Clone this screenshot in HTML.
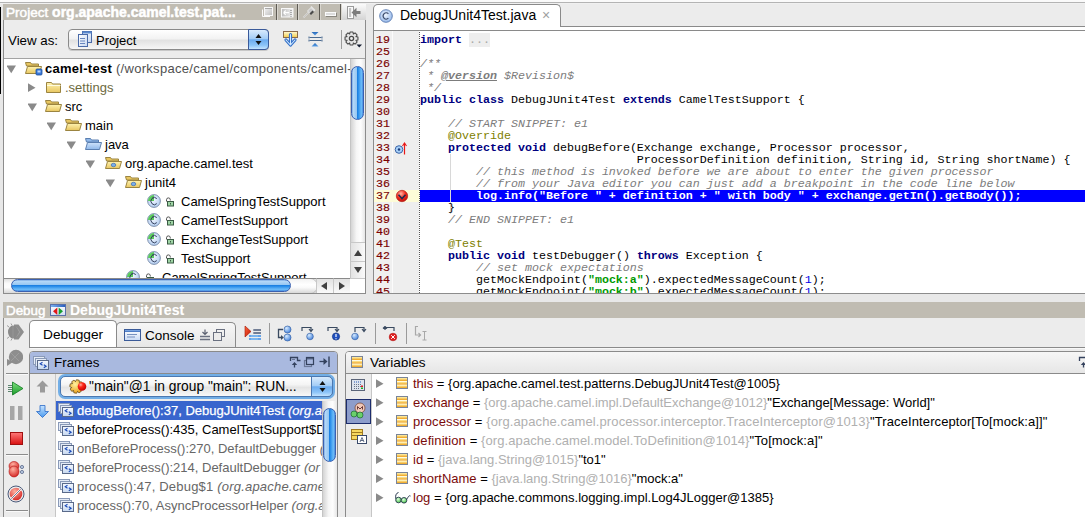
<!DOCTYPE html>
<html><head><meta charset="utf-8">
<style>
*{margin:0;padding:0;box-sizing:border-box}
html,body{width:1085px;height:517px;overflow:hidden;background:#e8e8e8;font-family:"Liberation Sans",sans-serif;font-size:13px;color:#000}
body{position:relative}
.a{position:absolute;display:block}
.t{position:absolute;white-space:pre;line-height:19px}
.m{position:absolute;font-family:"Liberation Mono",monospace;font-size:11.67px;line-height:12px;white-space:pre}
.kw{color:#000080;font-weight:bold}
.cm{color:#7c7c7c;font-style:italic}
.an{color:#808000}
.st{color:#009900;font-weight:bold}
.nu{color:#0000e6}
.ttl{color:#fff;text-shadow:0 0 1px rgba(255,255,255,.3)}
</style></head><body>

<div class="a" style="left:0px;top:0px;width:1085px;height:2px;background:#fafafa"></div>
<div class="a" style="left:0px;top:2px;width:1085px;height:1px;background:#b4b4b4"></div>
<div class="a" style="left:0px;top:3px;width:1085px;height:1px;background:#f0f0f0"></div>
<div class="a" style="left:0px;top:7px;width:1px;height:87px;background:#000"></div>
<div class="a" style="left:3px;top:4px;width:363px;height:290px;background:#ececec;border-left:1px solid #8c8c8c;border-right:1px solid #8c8c8c;border-bottom:1px solid #8c8c8c"></div>
<div class="a" style="left:3px;top:4px;width:363px;height:16px;background:#c0bcb2"></div>
<div class="t ttl" style="left:6px;top:4px;line-height:17px;font-size:13.6px;-webkit-text-stroke:.4px #fff">Project <b style="font-size:14px">org.apache.camel.test.pat...</b></div>
<div class="a" style="left:341px;top:4px;width:25px;height:16px;background:linear-gradient(#fbfbfb,#d4d4d4)"></div>
<div class="a" style="left:276px;top:4px;width:1px;height:16px;background:#5e5b54"></div>
<div class="a" style="left:277px;top:4px;width:1px;height:16px;background:#d8d5ce"></div>
<div class="a" style="left:297px;top:4px;width:1px;height:16px;background:#5e5b54"></div>
<div class="a" style="left:298px;top:4px;width:1px;height:16px;background:#d8d5ce"></div>
<div class="a" style="left:319px;top:4px;width:1px;height:16px;background:#5e5b54"></div>
<div class="a" style="left:320px;top:4px;width:1px;height:16px;background:#d8d5ce"></div>
<div class="a" style="left:340px;top:4px;width:1px;height:16px;background:#5e5b54"></div>
<div class="a" style="left:341px;top:4px;width:1px;height:16px;background:#d8d5ce"></div>
<svg class="a" style="left:261px;top:6px;" width="13" height="12" viewBox="0 0 13 12"><defs><linearGradient id="rw" x1="0" y1="0" x2="1" y2="1"><stop offset="0" stop-color="#f4f4f4"/><stop offset="1" stop-color="#bdbdbd"/></linearGradient></defs><path d="M1.5 3.5 V10.5 H9" stroke="#fafafa" fill="none" stroke-width="1"/><rect x="3.5" y="1.5" width="8" height="8" fill="url(#rw)" stroke="#f8f8f8"/><path d="M4 2.5 H11" stroke="#a8a8a8"/></svg>
<svg class="a" style="left:280px;top:7px;" width="14" height="11" viewBox="0 0 14 11"><defs><linearGradient id="sw" x1="0" y1="0" x2="1" y2="0"><stop offset="0" stop-color="#bcbcbc"/><stop offset="1" stop-color="#f2f2f2"/></linearGradient></defs><rect x="1.5" y="1.5" width="11.5" height="8.5" fill="url(#sw)" stroke="#f8f8f8"/><path d="M3.5 5.7 H9 M3.5 5.7 L5.7 3.5 M3.5 5.7 L5.7 7.9" stroke="#fff" stroke-width="1.2"/><path d="M11 3 v.8 M11 5 v.8 M11 7 v.8 M11 9 v.6" stroke="#555" stroke-width="1"/></svg>
<svg class="a" style="left:302px;top:5px;" width="14" height="14" viewBox="0 0 14 14"><path d="M1.5 12.5 L6.5 7.5" stroke="#f0f0f0" stroke-width="1.3"/><path d="M1.5 12.5 L6.5 7.5" stroke="#9a9a9a" stroke-width=".5"/><path d="M5.5 6 L9 2.5 L12 5.5 L8.5 9 Z" fill="#c8c8c8" stroke="#f4f4f4" stroke-width=".8"/><path d="M7.5 8.5 L10.5 5.5 L12 7 L9 10Z" fill="#4a4a4a"/><path d="M9 1.5 L13 5.5" stroke="#e8e8e8" stroke-width="1.2"/></svg>
<div class="a" style="left:325px;top:12px;width:11px;height:4px;background:#dcdcdc;border:1px solid #fafafa;box-shadow:1px 1px 0 #8a877f"></div>
<svg class="a" style="left:346px;top:5px;" width="16" height="15" viewBox="0 0 16 15"><rect x="1.5" y="1.5" width="6" height="12" fill="#fafafa" stroke="#9a9a9a"/><rect x="3" y="3" width="2.2" height="9" fill="#c4c4c4"/><path d="M5.5 7.5 L10.5 2.8 V6 H14.5 V9 H10.5 V12.2 Z" fill="#7c7c7c"/></svg>
<div class="a" style="left:4px;top:20px;width:361px;height:38px;background:#ececec"></div>
<div class="a" style="left:4px;top:58px;width:361px;height:1px;background:#a3a3a3"></div>
<div class="t" style="left:8px;top:31px;line-height:19px;font-size:13.3px">View as:</div>
<div class="a" style="left:68px;top:29px;width:201px;height:21px;border:1px solid #8a8a8a;border-radius:4px;background:linear-gradient(#ffffff,#f3f3f3 45%,#e2e2e2 55%,#f6f6f6);box-shadow:0 1px 0 rgba(0,0,0,.15)"></div>
<div class="a" style="left:248px;top:29px;width:21px;height:21px;border:1px solid #3a5a9a;border-radius:0 4px 4px 0;background:linear-gradient(#d8eafd,#a4cdf6 45%,#6cabef 52%,#8cc4f8 80%,#c4e4ff)"></div>
<svg class="a" style="left:254px;top:33px;" width="9" height="13" viewBox="0 0 9 13"><path d="M4.5 1 L7.5 5 H1.5Z M4.5 12 L7.5 8 H1.5Z" fill="#111"/></svg>
<svg class="a" style="left:77px;top:31px;" width="15" height="16" viewBox="0 0 15 16"><defs><linearGradient id="pj" x1="0" y1="0" x2="1" y2="1"><stop offset="0" stop-color="#ffffff"/><stop offset="1" stop-color="#c8d8f0"/></linearGradient></defs><rect x="5.5" y="0.5" width="9" height="11" fill="url(#pj)" stroke="#4a6aa8"/><rect x="5.5" y="0.5" width="9" height="2" fill="#5a8ad0"/><rect x="1.5" y="3.5" width="9" height="12" fill="url(#pj)" stroke="#4a6aa8"/><path d="M3 7.5h5M3 10h5M3 12.5h5" stroke="#5a7ab8" stroke-width=".9"/></svg>
<div class="t" style="left:96px;top:30px;line-height:21px;">Project</div>
<svg class="a" style="left:282px;top:30px;" width="17" height="18" viewBox="0 0 17 18"><defs><linearGradient id="sy" x1="0" y1="0" x2="0" y2="1"><stop offset="0" stop-color="#fffbd8"/><stop offset="1" stop-color="#f4cc48"/></linearGradient></defs><rect x="1.5" y="1.5" width="14" height="6" fill="url(#sy)" stroke="#8a6a4a"/><path d="M8.5 4.5 V14.5 M4 10 L8.5 15 L13 10" fill="none" stroke="#3270c8" stroke-width="3.2" stroke-linecap="round" stroke-linejoin="round"/><path d="M8.5 4.5 V14.5 M4 10 L8.5 15 L13 10" fill="none" stroke="#d4eaff" stroke-width="1.1" stroke-linecap="round" stroke-linejoin="round"/></svg>
<svg class="a" style="left:308px;top:31px;" width="15" height="17" viewBox="0 0 15 17"><defs><linearGradient id="ct" x1="0" y1="0" x2="0" y2="1"><stop offset="0" stop-color="#2a6ab8"/><stop offset="1" stop-color="#5aa0e8"/></linearGradient></defs><path d="M3.5 1 H10.5 L7 4.5Z" fill="url(#ct)"/><path d="M3.5 15.5 H10.5 L7 12Z" fill="url(#ct)"/><path d="M1.5 6.5 H13.5 M1.5 9.5 H13.5" stroke="#4a6a90" stroke-width="1.1"/><path d="M1 5.5 V7.5 M14 5.5 V7.5 M1 8.5 V10.5 M14 8.5 V10.5" stroke="#4a6a90" stroke-width="1"/></svg>
<div class="a" style="left:341px;top:30px;width:1px;height:19px;background:#9c9c9c"></div>
<svg class="a" style="left:344px;top:31px;" width="20" height="18" viewBox="0 0 20 18"><path d="M11.97 5.50 L13.94 6.06 L13.94 8.94 L11.97 9.50 L12.08 9.25 L13.07 11.04 L11.04 13.07 L9.25 12.08 L9.50 11.97 L8.94 13.94 L6.06 13.94 L5.50 11.97 L5.75 12.08 L3.96 13.07 L1.93 11.04 L2.92 9.25 L3.03 9.50 L1.06 8.94 L1.06 6.06 L3.03 5.50 L2.92 5.75 L1.93 3.96 L3.96 1.93 L5.75 2.92 L5.50 3.03 L6.06 1.06 L8.94 1.06 L9.50 3.03 L9.25 2.92 L11.04 1.93 L13.07 3.96 L12.08 5.75Z" fill="#e6e6e6" stroke="#4a4a4a" stroke-width="1.1" stroke-linejoin="round"/><circle cx="7.5" cy="7.5" r="2.1" fill="#ececec" stroke="#4a4a4a" stroke-width="1.3"/><path d="M12.5 13.5 h5.5 l-2.75 3z" fill="#141c30"/></svg>
<div class="a" style="left:4px;top:59px;width:346px;height:219px;background:#fff"></div>
<svg class="a" style="left:7px;top:65px;" width="10" height="9" viewBox="0 0 10 9"><path d="M-0.5 0.6 L9 0.6 L4.25 8.2 Z" fill="#8a8a8a"/></svg>
<svg class="a" style="left:25px;top:60px;" width="18" height="16" viewBox="0 0 18 16"><defs><linearGradient id="g25_60" x1="0" y1="0" x2="0" y2="1"><stop offset="0" stop-color="#fff3b0"/><stop offset="1" stop-color="#e8c660"/></linearGradient></defs><path d="M0.5 2.5 h5 l1 1.5 h7 v2 h-12 z" fill="#e8c660" stroke="#9b8440" stroke-width="1"/><path d="M0.5 13.5 L2.5 6.5 H16.5 L14.5 13.5 Z" fill="url(#g25_60)" stroke="#9b8440" stroke-width="1"/><rect x="11" y="9" width="6" height="6" rx="1" fill="#3a78d8" stroke="#1d4f9c" stroke-width=".8"/><rect x="12.5" y="10.5" width="3" height="2" fill="#bcd6f8"/></svg>
<div class="t" style="left:45px;top:59px"><b style="letter-spacing:.27px">camel-test</b><span style="color:#505050;letter-spacing:.3px"> (/workspace/camel/components/camel-</span></div>
<svg class="a" style="left:28px;top:83px;" width="9" height="10" viewBox="0 0 9 10"><path d="M0 0.3 L7.5 4.65 L0 9 Z" fill="#8a8a8a"/></svg>
<svg class="a" style="left:46px;top:79px;" width="18" height="16" viewBox="0 0 18 16"><defs><linearGradient id="g46_79" x1="0" y1="0" x2="0" y2="1"><stop offset="0" stop-color="#fff3b0"/><stop offset="1" stop-color="#e8c660"/></linearGradient></defs><path d="M0.5 3.5 h5 l1 1.5 h8 v8.5 h-14 z" fill="url(#g46_79)" stroke="#9b8440" stroke-width="1"/><path d="M1 6.5 h13.5" stroke="#fffbe0" stroke-width="1"/></svg>
<div class="t" style="left:65px;top:78px;line-height:19px;color:#6d6a3e">.settings</div>
<svg class="a" style="left:28px;top:103px;" width="10" height="9" viewBox="0 0 10 9"><path d="M-0.5 0.6 L9 0.6 L4.25 8.2 Z" fill="#8a8a8a"/></svg>
<svg class="a" style="left:45px;top:98px;" width="18" height="16" viewBox="0 0 18 16"><defs><linearGradient id="g45_98" x1="0" y1="0" x2="0" y2="1"><stop offset="0" stop-color="#fff3b0"/><stop offset="1" stop-color="#e8c660"/></linearGradient></defs><path d="M0.5 2.5 h5 l1 1.5 h7 v2 h-12 z" fill="#e8c660" stroke="#9b8440" stroke-width="1"/><path d="M0.5 13.5 L2.5 6.5 H16.5 L14.5 13.5 Z" fill="url(#g45_98)" stroke="#9b8440" stroke-width="1"/></svg>
<div class="t" style="left:65px;top:97px;line-height:19px;">src</div>
<svg class="a" style="left:47px;top:122px;" width="10" height="9" viewBox="0 0 10 9"><path d="M-0.5 0.6 L9 0.6 L4.25 8.2 Z" fill="#8a8a8a"/></svg>
<svg class="a" style="left:65px;top:117px;" width="18" height="16" viewBox="0 0 18 16"><defs><linearGradient id="g65_117" x1="0" y1="0" x2="0" y2="1"><stop offset="0" stop-color="#fff3b0"/><stop offset="1" stop-color="#e8c660"/></linearGradient></defs><path d="M0.5 2.5 h5 l1 1.5 h7 v2 h-12 z" fill="#e8c660" stroke="#9b8440" stroke-width="1"/><path d="M0.5 13.5 L2.5 6.5 H16.5 L14.5 13.5 Z" fill="url(#g65_117)" stroke="#9b8440" stroke-width="1"/></svg>
<div class="t" style="left:85px;top:116px;line-height:19px;">main</div>
<svg class="a" style="left:67px;top:141px;" width="10" height="9" viewBox="0 0 10 9"><path d="M-0.5 0.6 L9 0.6 L4.25 8.2 Z" fill="#8a8a8a"/></svg>
<svg class="a" style="left:85px;top:136px;" width="18" height="16" viewBox="0 0 18 16"><defs><linearGradient id="g85_136" x1="0" y1="0" x2="0" y2="1"><stop offset="0" stop-color="#cfe3fb"/><stop offset="1" stop-color="#8fb8ea"/></linearGradient></defs><path d="M0.5 2.5 h5 l1 1.5 h7 v2 h-12 z" fill="#8fb8ea" stroke="#5b7fb0" stroke-width="1"/><path d="M0.5 13.5 L2.5 6.5 H16.5 L14.5 13.5 Z" fill="url(#g85_136)" stroke="#5b7fb0" stroke-width="1"/></svg>
<div class="t" style="left:105px;top:135px;line-height:19px;">java</div>
<svg class="a" style="left:86px;top:160px;" width="10" height="9" viewBox="0 0 10 9"><path d="M-0.5 0.6 L9 0.6 L4.25 8.2 Z" fill="#8a8a8a"/></svg>
<svg class="a" style="left:105px;top:155px;" width="18" height="16" viewBox="0 0 18 16"><defs><linearGradient id="g105_155" x1="0" y1="0" x2="0" y2="1"><stop offset="0" stop-color="#fff3b0"/><stop offset="1" stop-color="#e8c660"/></linearGradient></defs><path d="M0.5 2.5 h5 l1 1.5 h7 v2 h-12 z" fill="#e8c660" stroke="#9b8440" stroke-width="1"/><path d="M0.5 13.5 L2.5 6.5 H16.5 L14.5 13.5 Z" fill="url(#g105_155)" stroke="#9b8440" stroke-width="1"/><ellipse cx="8.5" cy="10" rx="2.3" ry="1.7" fill="#7aaeea" stroke="#3a6ab0" stroke-width=".7"/></svg>
<div class="t" style="left:125px;top:154px;line-height:19px;">org.apache.camel.test</div>
<svg class="a" style="left:106px;top:179px;" width="10" height="9" viewBox="0 0 10 9"><path d="M-0.5 0.6 L9 0.6 L4.25 8.2 Z" fill="#8a8a8a"/></svg>
<svg class="a" style="left:125px;top:174px;" width="18" height="16" viewBox="0 0 18 16"><defs><linearGradient id="g125_174" x1="0" y1="0" x2="0" y2="1"><stop offset="0" stop-color="#fff3b0"/><stop offset="1" stop-color="#e8c660"/></linearGradient></defs><path d="M0.5 2.5 h5 l1 1.5 h7 v2 h-12 z" fill="#e8c660" stroke="#9b8440" stroke-width="1"/><path d="M0.5 13.5 L2.5 6.5 H16.5 L14.5 13.5 Z" fill="url(#g125_174)" stroke="#9b8440" stroke-width="1"/><ellipse cx="8.5" cy="10" rx="2.3" ry="1.7" fill="#7aaeea" stroke="#3a6ab0" stroke-width=".7"/></svg>
<div class="t" style="left:145px;top:173px;line-height:19px;">junit4</div>
<svg class="a" style="left:147px;top:194px;" width="14" height="14" viewBox="0 0 14 14"><defs><radialGradient id="cg" cx=".45" cy=".4" r=".7"><stop offset="0" stop-color="#f4f8ff"/><stop offset="1" stop-color="#a8c6ee"/></radialGradient></defs><circle cx="7" cy="7" r="6.4" fill="url(#cg)" stroke="#6a7c9c" stroke-width=".8"/><path d="M7 7 L7 1 A6 6 0 0 0 1 7 Z" fill="#5acc5a"/><path d="M9.8 4.6 A3.4 3.6 0 1 0 9.8 9.6" fill="none" stroke="#34405e" stroke-width="1"/><path d="M6 2.8 v2" stroke="#34405e" stroke-width=".7"/></svg>
<svg class="a" style="left:165px;top:197px;" width="10" height="10" viewBox="0 0 10 10"><path d="M1.5 4.5 V2.8 A1.9 1.9 0 0 1 5.3 2.8 V3.5" fill="none" stroke="#555" stroke-width="1"/><rect x="2.5" y="4.5" width="6" height="4.5" fill="#9ed4a4" stroke="#3a5a44" stroke-width="1"/><path d="M5.5 6 v1.5" stroke="#3a5a44"/></svg>
<div class="t" style="left:181px;top:192px;line-height:19px;">CamelSpringTestSupport</div>
<svg class="a" style="left:147px;top:213px;" width="14" height="14" viewBox="0 0 14 14"><defs><radialGradient id="cg" cx=".45" cy=".4" r=".7"><stop offset="0" stop-color="#f4f8ff"/><stop offset="1" stop-color="#a8c6ee"/></radialGradient></defs><circle cx="7" cy="7" r="6.4" fill="url(#cg)" stroke="#6a7c9c" stroke-width=".8"/><path d="M7 7 L7 1 A6 6 0 0 0 1 7 Z" fill="#5acc5a"/><path d="M9.8 4.6 A3.4 3.6 0 1 0 9.8 9.6" fill="none" stroke="#34405e" stroke-width="1"/><path d="M6 2.8 v2" stroke="#34405e" stroke-width=".7"/></svg>
<svg class="a" style="left:165px;top:216px;" width="10" height="10" viewBox="0 0 10 10"><path d="M1.5 4.5 V2.8 A1.9 1.9 0 0 1 5.3 2.8 V3.5" fill="none" stroke="#555" stroke-width="1"/><rect x="2.5" y="4.5" width="6" height="4.5" fill="#9ed4a4" stroke="#3a5a44" stroke-width="1"/><path d="M5.5 6 v1.5" stroke="#3a5a44"/></svg>
<div class="t" style="left:181px;top:211px;line-height:19px;">CamelTestSupport</div>
<svg class="a" style="left:147px;top:232px;" width="14" height="14" viewBox="0 0 14 14"><defs><radialGradient id="cg" cx=".45" cy=".4" r=".7"><stop offset="0" stop-color="#f4f8ff"/><stop offset="1" stop-color="#a8c6ee"/></radialGradient></defs><circle cx="7" cy="7" r="6.4" fill="url(#cg)" stroke="#6a7c9c" stroke-width=".8"/><path d="M7 7 L7 1 A6 6 0 0 0 1 7 Z" fill="#5acc5a"/><path d="M9.8 4.6 A3.4 3.6 0 1 0 9.8 9.6" fill="none" stroke="#34405e" stroke-width="1"/><path d="M6 2.8 v2" stroke="#34405e" stroke-width=".7"/></svg>
<svg class="a" style="left:165px;top:235px;" width="10" height="10" viewBox="0 0 10 10"><path d="M1.5 4.5 V2.8 A1.9 1.9 0 0 1 5.3 2.8 V3.5" fill="none" stroke="#555" stroke-width="1"/><rect x="2.5" y="4.5" width="6" height="4.5" fill="#9ed4a4" stroke="#3a5a44" stroke-width="1"/><path d="M5.5 6 v1.5" stroke="#3a5a44"/></svg>
<div class="t" style="left:181px;top:230px;line-height:19px;">ExchangeTestSupport</div>
<svg class="a" style="left:147px;top:251px;" width="14" height="14" viewBox="0 0 14 14"><defs><radialGradient id="cg" cx=".45" cy=".4" r=".7"><stop offset="0" stop-color="#f4f8ff"/><stop offset="1" stop-color="#a8c6ee"/></radialGradient></defs><circle cx="7" cy="7" r="6.4" fill="url(#cg)" stroke="#6a7c9c" stroke-width=".8"/><path d="M7 7 L7 1 A6 6 0 0 0 1 7 Z" fill="#5acc5a"/><path d="M9.8 4.6 A3.4 3.6 0 1 0 9.8 9.6" fill="none" stroke="#34405e" stroke-width="1"/><path d="M6 2.8 v2" stroke="#34405e" stroke-width=".7"/></svg>
<svg class="a" style="left:165px;top:254px;" width="10" height="10" viewBox="0 0 10 10"><path d="M1.5 4.5 V2.8 A1.9 1.9 0 0 1 5.3 2.8 V3.5" fill="none" stroke="#555" stroke-width="1"/><rect x="2.5" y="4.5" width="6" height="4.5" fill="#9ed4a4" stroke="#3a5a44" stroke-width="1"/><path d="M5.5 6 v1.5" stroke="#3a5a44"/></svg>
<div class="t" style="left:181px;top:249px;line-height:19px;">TestSupport</div>
<svg class="a" style="left:126px;top:270px;" width="14" height="14" viewBox="0 0 14 14"><defs><radialGradient id="cg" cx=".45" cy=".4" r=".7"><stop offset="0" stop-color="#f4f8ff"/><stop offset="1" stop-color="#a8c6ee"/></radialGradient></defs><circle cx="7" cy="7" r="6.4" fill="url(#cg)" stroke="#6a7c9c" stroke-width=".8"/><path d="M7 7 L7 1 A6 6 0 0 0 1 7 Z" fill="#5acc5a"/><path d="M9.8 4.6 A3.4 3.6 0 1 0 9.8 9.6" fill="none" stroke="#34405e" stroke-width="1"/><path d="M6 2.8 v2" stroke="#34405e" stroke-width=".7"/></svg>
<svg class="a" style="left:145px;top:273px;" width="10" height="10" viewBox="0 0 10 10"><path d="M1.5 4.5 V2.8 A1.9 1.9 0 0 1 5.3 2.8 V3.5" fill="none" stroke="#555" stroke-width="1"/><rect x="2.5" y="4.5" width="6" height="4.5" fill="#9ed4a4" stroke="#3a5a44" stroke-width="1"/><path d="M5.5 6 v1.5" stroke="#3a5a44"/></svg>
<div class="t" style="left:162px;top:268px;line-height:19px;">CamelSpringTestSupport</div>
<div class="a" style="left:350px;top:59px;width:15px;height:219px;background:linear-gradient(90deg,#d4d4d4,#f6f6f6 40%,#fdfdfd 70%,#e6e6e6);border-left:1px solid #c4c4c4"></div>
<div class="a" style="left:351px;top:66px;width:13px;height:54px;border-radius:7px;border:1px solid #3a60b0;background:linear-gradient(90deg,#7aa8e0,#b4d8f8 12%,#98c8f2 42%,#1a7ee0 48%,#2a8eea 58%,#6cbcf8 85%,#4a8ee0)"></div>
<div class="a" style="left:350px;top:242px;width:15px;height:19px;background:linear-gradient(90deg,#e2e2e2,#fafafa);border-top:1px solid #c8c8c8;border-left:1px solid #c4c4c4"></div>
<div class="a" style="left:350px;top:261px;width:15px;height:17px;background:linear-gradient(90deg,#e2e2e2,#fafafa);border-top:1px solid #c8c8c8;border-left:1px solid #c4c4c4"></div>
<svg class="a" style="left:354px;top:250px;" width="8" height="6" viewBox="0 0 8 6"><path d="M4 0 L8 6 H0Z" fill="#404040"/></svg>
<svg class="a" style="left:354px;top:267px;" width="8" height="6" viewBox="0 0 8 6"><path d="M4 6 L8 0 H0Z" fill="#404040"/></svg>
<div class="a" style="left:4px;top:278px;width:346px;height:15px;background:linear-gradient(#e0e0e0,#fafafa 30%,#fdfdfd 60%,#d8d8d8);border-top:1px solid #8a8a8a"></div>
<div class="a" style="left:260px;top:279px;width:57px;height:14px;border-radius:0 8px 8px 0;background:linear-gradient(#f2f2f2,#ffffff 40%,#fafafa 60%,#d8d8d8);box-shadow:1px 0 1px rgba(0,0,0,.25)"></div>
<div class="a" style="left:11px;top:279px;width:280px;height:13px;border-radius:7px;border:1px solid #3a60b0;background:linear-gradient(#7aa8e0,#b4d8f8 12%,#98c8f2 42%,#1a7ee0 48%,#2a8eea 58%,#6cbcf8 85%,#4a8ee0)"></div>
<div class="a" style="left:316px;top:278px;width:17px;height:15px;background:linear-gradient(#e2e2e2,#fafafa);border-left:1px solid #c8c8c8;border-top:1px solid #8a8a8a"></div>
<div class="a" style="left:333px;top:278px;width:17px;height:15px;background:linear-gradient(#e2e2e2,#fafafa);border-left:1px solid #c8c8c8;border-top:1px solid #8a8a8a"></div>
<svg class="a" style="left:321px;top:282px;" width="6" height="8" viewBox="0 0 6 8"><path d="M0 4 L6 0 V8Z" fill="#404040"/></svg>
<svg class="a" style="left:339px;top:282px;" width="6" height="8" viewBox="0 0 6 8"><path d="M6 4 L0 0 V8Z" fill="#404040"/></svg>
<div class="a" style="left:350px;top:278px;width:15px;height:15px;background:#fff;border-top:1px solid #c8c8c8"></div>
<div class="a" style="left:373px;top:12px;width:712px;height:282px;background:#fff;border-left:1px solid #8c8c8c;border-bottom:1px solid #8c8c8c"></div>
<div class="a" style="left:374px;top:4px;width:711px;height:23px;background:#ececec"></div>
<div class="a" style="left:373px;top:4px;width:1px;height:10px;background:#e8e8e8"></div>
<div class="a" style="left:374px;top:26px;width:711px;height:1px;background:#8a8a8a"></div>
<div class="a" style="left:374px;top:30px;width:711px;height:1px;background:#8a8a8a"></div>
<div class="a" style="left:373px;top:4px;width:188px;height:23px;background:#fff;border:1px solid #8a8a8a;border-bottom:none;border-radius:5px 5px 0 0"></div>
<div class="a" style="left:374px;top:27px;width:711px;height:3px;background:#fff"></div>
<div class="a" style="left:374px;top:26px;width:186px;height:1px;background:#fff"></div>
<div class="a" style="left:374px;top:30px;width:711px;height:1px;background:#8a8a8a"></div>
<svg class="a" style="left:379px;top:9px;" width="14" height="14" viewBox="0 0 14 14"><defs><radialGradient id="tg" cx=".45" cy=".4" r=".65"><stop offset="0" stop-color="#f0f6ff"/><stop offset="1" stop-color="#90b4e8"/></radialGradient></defs><circle cx="7" cy="7" r="6.3" fill="url(#tg)" stroke="#5a7ab0" stroke-width=".9"/><path d="M9.4 4.8 A3 3.2 0 1 0 9.4 9.2" fill="none" stroke="#3a4a6a" stroke-width="1.1"/></svg>
<div class="t" style="left:400px;top:6px;line-height:19px;font-size:14px">DebugJUnit4Test.java</div>
<div class="t" style="left:542px;top:6px;line-height:19px;color:#a0a0a0;font-size:14px">×</div>
<div class="a" style="left:374px;top:31px;width:18px;height:262px;background:#f0f0f0"></div>
<div class="a" style="left:393px;top:31px;width:26px;height:262px;background:#eeeeee"></div>
<div class="a" style="left:392px;top:31px;width:1px;height:262px;background:#fbfbfb"></div>
<div class="a" style="left:419px;top:31px;width:1px;height:262px;background:#fff"></div>
<div class="a" style="left:374px;top:190px;width:45px;height:12px;background:#fdfcd8"></div>
<div class="a" style="left:420px;top:190px;width:665px;height:12px;background:#0000ff"></div>
<div class="a" style="left:419px;top:31px;width:1px;height:262px;background-image:linear-gradient(transparent 50%,#555 50%);background-size:1px 2px"></div>
<div class="a" style="left:450px;top:154px;width:1px;height:60px;background:#d8d8d8"></div>
<div class="a" style="left:374px;top:31px;width:711px;height:262px;overflow:hidden">
<div class="m" style="left:2px;top:3px;color:#7a0000;-webkit-text-stroke:.15px #7a0000">19</div>
<div class="m" style="left:46px;top:3px"><span class="kw">import</span> <span style="color:#a8a8a8;background:#eeeeee">...</span></div>
<div class="m" style="left:2px;top:15px;color:#7a0000;-webkit-text-stroke:.15px #7a0000">25</div>
<div class="m" style="left:46px;top:15px"></div>
<div class="m" style="left:2px;top:27px;color:#7a0000;-webkit-text-stroke:.15px #7a0000">26</div>
<div class="m" style="left:46px;top:27px"><span class="cm">/**</span></div>
<div class="m" style="left:2px;top:39px;color:#7a0000;-webkit-text-stroke:.15px #7a0000">27</div>
<div class="m" style="left:46px;top:39px"><span class="cm"> * </span><span class="cm" style="font-weight:bold;text-decoration:underline">@version</span><span class="cm"> $Revision$</span></div>
<div class="m" style="left:2px;top:51px;color:#7a0000;-webkit-text-stroke:.15px #7a0000">28</div>
<div class="m" style="left:46px;top:51px"><span class="cm"> */</span></div>
<div class="m" style="left:2px;top:63px;color:#7a0000;-webkit-text-stroke:.15px #7a0000">29</div>
<div class="m" style="left:46px;top:63px"><span class="kw">public</span> <span class="kw">class</span> DebugJUnit4Test <span class="kw">extends</span> CamelTestSupport {</div>
<div class="m" style="left:2px;top:75px;color:#7a0000;-webkit-text-stroke:.15px #7a0000">30</div>
<div class="m" style="left:46px;top:75px"></div>
<div class="m" style="left:2px;top:87px;color:#7a0000;-webkit-text-stroke:.15px #7a0000">31</div>
<div class="m" style="left:46px;top:87px">    <span class="cm">// START SNIPPET: e1</span></div>
<div class="m" style="left:2px;top:99px;color:#7a0000;-webkit-text-stroke:.15px #7a0000">32</div>
<div class="m" style="left:46px;top:99px">    <span class="an">@Override</span></div>
<div class="m" style="left:2px;top:111px;color:#7a0000;-webkit-text-stroke:.15px #7a0000">33</div>
<div class="m" style="left:46px;top:111px">    <span class="kw">protected</span> <span class="kw">void</span> debugBefore(Exchange exchange, Processor processor,</div>
<div class="m" style="left:2px;top:123px;color:#7a0000;-webkit-text-stroke:.15px #7a0000">34</div>
<div class="m" style="left:46px;top:123px">                               ProcessorDefinition definition, String id, String shortName) {</div>
<div class="m" style="left:2px;top:135px;color:#7a0000;-webkit-text-stroke:.15px #7a0000">35</div>
<div class="m" style="left:46px;top:135px">        <span class="cm">// this method is invoked before we are about to enter the given processor</span></div>
<div class="m" style="left:2px;top:147px;color:#7a0000;-webkit-text-stroke:.15px #7a0000">36</div>
<div class="m" style="left:46px;top:147px">        <span class="cm">// from your Java editor you can just add a breakpoint in the code line below</span></div>
<div class="m" style="left:2px;top:159px;color:#7a0000;-webkit-text-stroke:.15px #7a0000">37</div>
<div class="m" style="left:46px;top:159px">        <b style="color:#fff">log.info(&quot;Before &quot; + definition + &quot; with body &quot; + exchange.getIn().getBody());</b></div>
<div class="m" style="left:2px;top:171px;color:#7a0000;-webkit-text-stroke:.15px #7a0000">38</div>
<div class="m" style="left:46px;top:171px">    }</div>
<div class="m" style="left:2px;top:183px;color:#7a0000;-webkit-text-stroke:.15px #7a0000">39</div>
<div class="m" style="left:46px;top:183px">    <span class="cm">// END SNIPPET: e1</span></div>
<div class="m" style="left:2px;top:195px;color:#7a0000;-webkit-text-stroke:.15px #7a0000">40</div>
<div class="m" style="left:46px;top:195px"></div>
<div class="m" style="left:2px;top:207px;color:#7a0000;-webkit-text-stroke:.15px #7a0000">41</div>
<div class="m" style="left:46px;top:207px">    <span class="an">@Test</span></div>
<div class="m" style="left:2px;top:219px;color:#7a0000;-webkit-text-stroke:.15px #7a0000">42</div>
<div class="m" style="left:46px;top:219px">    <span class="kw">public</span> <span class="kw">void</span> testDebugger() <span class="kw">throws</span> Exception {</div>
<div class="m" style="left:2px;top:231px;color:#7a0000;-webkit-text-stroke:.15px #7a0000">43</div>
<div class="m" style="left:46px;top:231px">        <span class="cm">// set mock expectations</span></div>
<div class="m" style="left:2px;top:243px;color:#7a0000;-webkit-text-stroke:.15px #7a0000">44</div>
<div class="m" style="left:46px;top:243px">        getMockEndpoint(<span class="st">&quot;mock:a&quot;</span>).expectedMessageCount(<span class="nu">1</span>);</div>
<div class="m" style="left:2px;top:255px;color:#7a0000;-webkit-text-stroke:.15px #7a0000">45</div>
<div class="m" style="left:46px;top:255px">        getMockEndpoint(<span class="st">&quot;mock:b&quot;</span>).expectedMessageCount(<span class="nu">1</span>);</div>
</div>
<svg class="a" style="left:394px;top:142px;" width="16" height="13" viewBox="0 0 16 13"><circle cx="5" cy="7.5" r="3.8" fill="#a8d0f8" stroke="#3a64a8" stroke-width="1"/><circle cx="5" cy="7.5" r="1.2" fill="#1a3a78"/><path d="M10.5 12.5 V1.5" stroke="#e81818" stroke-width="1.2"/><path d="M8.5 4 L10.5 1 L12.5 4" stroke="#e81818" fill="none" stroke-width="1.1"/></svg>
<svg class="a" style="left:395px;top:189px;" width="14" height="14" viewBox="0 0 14 14"><defs><radialGradient id="bp" cx=".4" cy=".3" r=".8"><stop offset="0" stop-color="#ffb4a4"/><stop offset=".5" stop-color="#f02a1a"/><stop offset="1" stop-color="#b80a0a"/></radialGradient></defs><circle cx="7" cy="7" r="5.7" fill="url(#bp)" stroke="#a81010" stroke-width=".6"/><path d="M3.5 5.8 L7 9.6 L10.5 5.8" stroke="#1c2a50" stroke-width="1.5" fill="none"/></svg>
<div class="a" style="left:3px;top:302px;width:1082px;height:16px;background:#c0bcb2"></div>
<div class="t ttl" style="left:6px;top:302px;line-height:17px;font-size:13.4px;-webkit-text-stroke:.4px #fff">Debug</div>
<svg class="a" style="left:50px;top:304px;" width="16" height="12" viewBox="0 0 16 12"><defs><linearGradient id="dw" x1="0" y1="0" x2="0" y2="1"><stop offset="0" stop-color="#ffffff"/><stop offset="1" stop-color="#d0dcf4"/></linearGradient><linearGradient id="dt" x1="0" y1="0" x2="1" y2="0"><stop offset="0" stop-color="#7ab0f0"/><stop offset="1" stop-color="#2a60c0"/></linearGradient></defs><rect x="0.5" y="0.5" width="15" height="11" fill="url(#dw)" stroke="#5a70a8"/><rect x="1" y="1" width="14" height="2" fill="url(#dt)"/><path d="M7.3 3.5 L3 7.3 L7.3 11Z" fill="#e01818"/><path d="M8.7 3.5 L13 7.3 L8.7 11Z" fill="#18a030"/></svg>
<div class="t ttl" style="left:70px;top:302px;line-height:17px;font-size:14px;font-weight:bold">DebugJUnit4Test</div>
<div class="a" style="left:3px;top:318px;width:1082px;height:199px;background:#ececec;border-left:1px solid #8c8c8c"></div>
<svg class="a" style="left:6px;top:323px;" width="20" height="18" viewBox="0 0 20 18"><path d="M8 1.5 H12.5 L18 9 L12.5 16.5 H8 Z" fill="#8e8e8e"/><path d="M10 4 L14 9 L10 14" stroke="#a4a4a4" fill="none" stroke-width=".9"/><ellipse cx="7" cy="9" rx="5" ry="6.5" fill="#8a8a8a"/><path d="M7 3 V15" stroke="#9c9c9c" stroke-width=".7"/><path d="M1 2.5 L3 4 M1 15.5 L3 14 M5 0.5 L6 2.5 M5 17.5 L6 15.5" stroke="#8a8a8a" stroke-width=".8"/></svg>
<svg class="a" style="left:5px;top:349px;" width="18" height="18" viewBox="0 0 18 18"><circle cx="11" cy="8" r="7.2" fill="#8e8e8e"/><path d="M2 10 L2 17 L8 13 Z" fill="#8e8e8e"/><path d="M6 4 L14 12 M14 4 L6 12" stroke="#9e9e9e" stroke-width="1"/></svg>
<div class="a" style="left:6px;top:373px;width:22px;height:1px;background:#8c8c8c"></div>
<div class="a" style="left:6px;top:374px;width:22px;height:1px;background:#fafafa"></div>
<svg class="a" style="left:8px;top:381px;" width="16" height="15" viewBox="0 0 16 15"><defs><linearGradient id="pl" x1="0" y1="0" x2="0" y2="1"><stop offset="0" stop-color="#7ee07e"/><stop offset="1" stop-color="#1a9a2a"/></linearGradient></defs><path d="M4.5 1 L15 7.5 L4.5 14 Z" fill="url(#pl)" stroke="#0e7a1e" stroke-width=".8"/><path d="M0 4.5h4M0 6.5h4M0 8.5h4M0 10.5h4" stroke="#3a6a50" stroke-width=".8"/></svg>
<svg class="a" style="left:10px;top:406px;" width="13" height="14" viewBox="0 0 13 14"><rect x="0" y="0" width="4.5" height="14" fill="#a6a6a6"/><rect x="8" y="0" width="4.5" height="14" fill="#a6a6a6"/></svg>
<svg class="a" style="left:10px;top:432px;" width="13" height="13" viewBox="0 0 13 13"><defs><linearGradient id="sp" x1="0" y1="0" x2="0" y2="1"><stop offset="0" stop-color="#ff7a7a"/><stop offset="1" stop-color="#d81010"/></linearGradient></defs><rect x="0.5" y="0.5" width="12" height="12" fill="url(#sp)" stroke="#a01010"/></svg>
<div class="a" style="left:6px;top:454px;width:22px;height:1px;background:#8c8c8c"></div>
<div class="a" style="left:6px;top:455px;width:22px;height:1px;background:#fafafa"></div>
<svg class="a" style="left:8px;top:461px;" width="17" height="17" viewBox="0 0 17 17"><defs><radialGradient id="rb" cx=".4" cy=".3" r=".8"><stop offset="0" stop-color="#ffb0a0"/><stop offset="1" stop-color="#d01818"/></radialGradient></defs><ellipse cx="6" cy="5" rx="5" ry="4.5" fill="url(#rb)" stroke="#b01010" stroke-width=".6"/><ellipse cx="6" cy="10.5" rx="5" ry="5.5" fill="url(#rb)" stroke="#b01010" stroke-width=".6"/><circle cx="14" cy="6" r="1.6" fill="#b8c8e0" stroke="#4a5a80" stroke-width=".7"/><circle cx="14" cy="11" r="1.6" fill="#b8c8e0" stroke="#4a5a80" stroke-width=".7"/></svg>
<svg class="a" style="left:7px;top:485px;" width="18" height="18" viewBox="0 0 18 18"><circle cx="9" cy="9" r="8" fill="none" stroke="#4a5a7a" stroke-width="1"/><circle cx="9" cy="9" r="6.3" fill="url(#rb)"/><path d="M4.5 13.5 L13.5 4.5" stroke="#fff" stroke-width="1.8"/><path d="M4.5 13.5 L13.5 4.5" stroke="#4a5a7a" stroke-width=".8"/></svg>
<div class="a" style="left:6px;top:510px;width:22px;height:1px;background:#8c8c8c"></div>
<div class="a" style="left:6px;top:511px;width:22px;height:1px;background:#fafafa"></div>
<div class="a" style="left:30px;top:347px;width:1055px;height:1px;background:#8a8a8a"></div>
<div class="a" style="left:30px;top:348px;width:1055px;height:1px;background:#f8f8f8"></div>
<div class="a" style="left:29px;top:320px;width:88px;height:28px;background:#fff;border:1px solid #8a8a8a;border-bottom:none;border-radius:5px 5px 0 0"></div>
<div class="t" style="left:43px;top:324px;line-height:21px;font-size:13.7px">Debugger</div>
<div class="a" style="left:116px;top:322px;width:120px;height:26px;background:linear-gradient(#f6f6f6,#e6e6e6);border:1px solid #8a8a8a;border-bottom:none;border-radius:5px 5px 0 0"></div>
<div class="a" style="left:30px;top:347px;width:206px;height:1px;background:#8a8a8a"></div>
<svg class="a" style="left:124px;top:329px;" width="17" height="12" viewBox="0 0 17 12"><defs><linearGradient id="cw" x1="0" y1="0" x2="0" y2="1"><stop offset="0" stop-color="#8ab4ec"/><stop offset="1" stop-color="#3a6ab8"/></linearGradient><linearGradient id="cb" x1="0" y1="0" x2="0" y2="1"><stop offset="0" stop-color="#ffffff"/><stop offset="1" stop-color="#c8daf4"/></linearGradient></defs><rect x="0.5" y="0.5" width="16" height="11" fill="url(#cb)" stroke="#3a5a98"/><rect x="1" y="1" width="15" height="2" fill="url(#cw)"/><path d="M3 5.5h10M3 8h8" stroke="#5a7ab0" stroke-width=".8"/></svg>
<div class="t" style="left:145px;top:325px;line-height:21px;font-size:13.5px">Console</div>
<svg class="a" style="left:199px;top:329px;" width="12" height="12" viewBox="0 0 12 12"><path d="M6 0.5 V5 M3.5 3 L6 5.5 L8.5 3" stroke="#5a6070" fill="none" stroke-width="1.2"/><path d="M1 7.5 H11 M1 10.5 H11" stroke="#6a7080" stroke-width="1.6"/></svg>
<svg class="a" style="left:213px;top:329px;" width="12" height="12" viewBox="0 0 12 12"><rect x="3.5" y="0.5" width="8" height="7" fill="none" stroke="#6a7080"/><rect x="0.5" y="3.5" width="8" height="8" fill="#ececec" stroke="#6a7080"/></svg>
<svg class="a" style="left:244px;top:325px;" width="19" height="16" viewBox="0 0 19 16"><defs><linearGradient id="rt" x1="0" y1="0" x2="1" y2="1"><stop offset="0" stop-color="#ff6a40"/><stop offset="1" stop-color="#c01000"/></linearGradient></defs><path d="M1 1 L7 6.5 L1 12 Z" fill="url(#rt)" stroke="#a01000" stroke-width=".6"/><path d="M9.3 5 H17 M9.3 8 H17" stroke="#4a5a78" stroke-width="1.5"/><path d="M5 11 H17 M5 14 H17" stroke="#3a8ae8" stroke-width="1.7"/><path d="M7 11 H14 M7 14 H14" stroke="#aee0ff" stroke-width=".6"/></svg>
<div class="a" style="left:269px;top:323px;width:1px;height:21px;background:#9a9a9a"></div>
<svg class="a" style="left:277px;top:325px;" width="15" height="17" viewBox="0 0 15 17"><defs><radialGradient id="bl" cx=".35" cy=".3" r=".8"><stop offset="0" stop-color="#d8ecff"/><stop offset="1" stop-color="#3a7ad8"/></radialGradient></defs><circle cx="10.5" cy="4.5" r="3.5" fill="url(#bl)" stroke="#3a64a8" stroke-width=".7"/><circle cx="10.5" cy="12.5" r="3.5" fill="url(#bl)" stroke="#3a64a8" stroke-width=".7"/><path d="M6 4.5 H1.5 V12.5 H4.5" stroke="#3a4a60" fill="none" stroke-width="1.3"/><path d="M4 10 L6.8 12.5 L4 15Z" fill="#3a4a60"/></svg>
<svg class="a" style="left:301px;top:326px;" width="15" height="15" viewBox="0 0 15 15"><defs><radialGradient id="bl" cx=".35" cy=".3" r=".8"><stop offset="0" stop-color="#d8ecff"/><stop offset="1" stop-color="#3a7ad8"/></radialGradient></defs><circle cx="9" cy="10.5" r="3.3" fill="url(#bl)" stroke="#3a64a8" stroke-width=".7"/><path d="M1 5 V1.5 H10 V5 M8 3 L10 5.5 L12 3" stroke="#3a4a60" fill="none" stroke-width="1.2"/></svg>
<svg class="a" style="left:327px;top:326px;" width="15" height="15" viewBox="0 0 15 15"><defs><radialGradient id="bl" cx=".35" cy=".3" r=".8"><stop offset="0" stop-color="#d8ecff"/><stop offset="1" stop-color="#3a7ad8"/></radialGradient></defs><circle cx="9" cy="10.5" r="3.6" fill="#2050c0" stroke="#103080" stroke-width=".7"/><path d="M9 8 V11 M9 12.2 V13.2" stroke="#fff" stroke-width="1.2"/><path d="M1 5 V1.5 H10 V5 M8 3 L10 5.5 L12 3" stroke="#3a4a60" fill="none" stroke-width="1.2"/></svg>
<svg class="a" style="left:351px;top:326px;" width="16" height="15" viewBox="0 0 16 15"><defs><radialGradient id="bl" cx=".35" cy=".3" r=".8"><stop offset="0" stop-color="#d8ecff"/><stop offset="1" stop-color="#3a7ad8"/></radialGradient></defs><circle cx="4" cy="10.5" r="3.3" fill="url(#bl)" stroke="#3a64a8" stroke-width=".7"/><path d="M4 6 V1.5 H13 V5 M11 3 L13 5.5 L15 3" stroke="#3a4a60" fill="none" stroke-width="1.2"/></svg>
<div class="a" style="left:375px;top:323px;width:1px;height:21px;background:#9a9a9a"></div>
<svg class="a" style="left:382px;top:326px;" width="16" height="16" viewBox="0 0 16 16"><path d="M12 5 V1.5 H3 V4 M1 2.5 L3 0.5 L5 2.5" stroke="#3a4a60" fill="none" stroke-width="1.2"/><circle cx="11" cy="11" r="3.8" fill="#e02020" stroke="#b01010" stroke-width=".6"/><path d="M9.2 9.2 L12.8 12.8 M12.8 9.2 L9.2 12.8" stroke="#fff" stroke-width="1"/></svg>
<div class="a" style="left:406px;top:323px;width:1px;height:21px;background:#9a9a9a"></div>
<svg class="a" style="left:414px;top:325px;" width="14" height="16" viewBox="0 0 14 16"><path d="M4 1.5 H1.5 V10 H6 M4.5 8 L6.5 10 L4.5 12" stroke="#a8a8a8" fill="none" stroke-width="1.2"/><path d="M8.5 6.5 H12.5 M10.5 6.5 V15 M8.5 15 H12.5" stroke="#a8a8a8" stroke-width="1"/></svg>
<div class="a" style="left:29px;top:351px;width:309px;height:170px;background:#ececec;border:1px solid #8a8a8a;border-radius:4px 4px 0 0"></div>
<div class="a" style="left:30px;top:352px;width:307px;height:21px;background:#a9b9df;border-radius:3px 3px 0 0"></div>
<div class="a" style="left:30px;top:373px;width:307px;height:1px;background:#8a8a8a"></div>
<svg class="a" style="left:33px;top:356px;" width="17" height="15" viewBox="0 0 17 15"><defs><linearGradient id="fw" x1="0" y1="0" x2="0" y2="1"><stop offset="0" stop-color="#f4f8ff"/><stop offset="1" stop-color="#c6d8f0"/></linearGradient></defs><rect x="0.5" y="0.5" width="11" height="8" fill="#e4ebf6" stroke="#8a9ab8"/><rect x="2.5" y="2.5" width="11" height="8" fill="#e4ebf6" stroke="#8a9ab8"/><rect x="4.5" y="4.5" width="11" height="9" fill="url(#fw)" stroke="#5a6a8a"/><path d="M9.5 6.3 L7.2 7.8 L9.5 9.3 M10.8 8.8 L13.1 10.3 L10.8 11.8" stroke="#1a4ab8" fill="none" stroke-width="1.1"/></svg>
<div class="t" style="left:54px;top:352px;line-height:21px;font-size:13.4px">Frames</div>
<svg class="a" style="left:289px;top:356px;" width="13" height="12" viewBox="0 0 13 12"><path d="M1.5 5 V1.5 H8.5 V4.5 H11.5" stroke="#34425e" fill="none" stroke-width="1.3"/><path d="M3 3.5 H6" stroke="#6a7898" stroke-width="1"/><path d="M5.5 11.5 V7" stroke="#34425e" stroke-width="1.3"/><path d="M2.8 9 L5.5 6 L8.2 9Z" fill="#34425e"/></svg>
<svg class="a" style="left:303px;top:356px;" width="12" height="12" viewBox="0 0 12 12"><rect x="1.5" y="4.5" width="7" height="6" fill="none" stroke="#6a7898" stroke-width="1.2"/><rect x="3.5" y="1.5" width="7" height="7" fill="#a9b9df" stroke="#34425e" stroke-width="1.2"/><path d="M3.5 2.8 H10.5" stroke="#34425e" stroke-width="1"/></svg>
<svg class="a" style="left:319px;top:356px;" width="12" height="12" viewBox="0 0 12 12"><path d="M0.5 5.5 H5" stroke="#34425e" stroke-width="1.3"/><path d="M4.5 2 L8.5 5.5 L4.5 9Z" fill="#34425e"/><path d="M10 0.5 V11" stroke="#34425e" stroke-width="1.4"/></svg>
<div class="a" style="left:55px;top:374px;width:1px;height:143px;background:#c6c6c6"></div>
<svg class="a" style="left:36px;top:380px;" width="13" height="13" viewBox="0 0 13 13"><path d="M6.5 0.5 L12.5 6.5 H9 V12.5 H4 V6.5 H0.5Z" fill="#9a9a9a"/></svg>
<svg class="a" style="left:36px;top:405px;" width="13" height="13" viewBox="0 0 13 13"><defs><linearGradient id="da" x1="0" y1="0" x2="0" y2="1"><stop offset="0" stop-color="#c8e4ff"/><stop offset="1" stop-color="#4a9aee"/></linearGradient></defs><path d="M6.5 12.5 L12.5 6.5 H9 V0.5 H4 V6.5 H0.5Z" fill="url(#da)" stroke="#2a6ac8" stroke-width=".8"/></svg>
<div class="a" style="left:58px;top:374px;width:277px;height:25px;border-radius:7px;background:#72aee6"></div>
<div class="a" style="left:60px;top:376px;width:273px;height:21px;border:1px solid #4c78b0;border-radius:5px;background:linear-gradient(#ffffff,#f4f4f4 40%,#e4e4e4 55%,#f8f8f8)"></div>
<div class="a" style="left:311px;top:376px;width:22px;height:21px;border:1px solid #4c78b0;border-radius:0 5px 5px 0;background:linear-gradient(#d8eafd,#a4cdf6 45%,#6cabef 52%,#8cc4f8 80%,#c4e4ff)"></div>
<svg class="a" style="left:318px;top:380px;" width="9" height="13" viewBox="0 0 9 13"><path d="M4.5 1 L7.5 5 H1.5Z M4.5 12 L7.5 8 H1.5Z" fill="#111"/></svg>
<svg class="a" style="left:69px;top:379px;" width="20" height="15" viewBox="0 0 20 15"><defs><radialGradient id="gr" cx=".4" cy=".35" r=".7"><stop offset="0" stop-color="#fff2a0"/><stop offset="1" stop-color="#e89a10"/></radialGradient><radialGradient id="rball" cx=".35" cy=".3" r=".75"><stop offset="0" stop-color="#ffb0a0"/><stop offset=".35" stop-color="#ff2a1a"/><stop offset="1" stop-color="#c00000"/></radialGradient></defs><path d="M12.38 6.41 L14.30 7.50 L13.76 10.15 L11.57 10.41 L11.72 10.18 L12.31 12.31 L10.06 13.80 L8.32 12.43 L8.59 12.38 L7.50 14.30 L4.85 13.76 L4.59 11.57 L4.82 11.72 L2.69 12.31 L1.20 10.06 L2.57 8.32 L2.62 8.59 L0.70 7.50 L1.24 4.85 L3.43 4.59 L3.28 4.82 L2.69 2.69 L4.94 1.20 L6.68 2.57 L6.41 2.62 L7.50 0.70 L10.15 1.24 L10.41 3.43 L10.18 3.28 L12.31 2.69 L13.80 4.94 L12.43 6.68Z" fill="url(#gr)" stroke="#6a5020" stroke-width=".8" stroke-linejoin="round"/><circle cx="13" cy="7.5" r="4.3" fill="url(#rball)"/></svg>
<div class="t" style="left:89px;top:377px;line-height:19px;font-size:13.8px">&quot;main&quot;@1 in group &quot;main&quot;: RUN...</div>
<div class="a" style="left:56px;top:401px;width:266px;height:116px;background:#fff"></div>
<div class="a" style="left:56px;top:401px;width:266px;height:19px;background:#3865cd"></div>
<div class="a" style="left:56px;top:401px;width:266px;height:116px;overflow:hidden">
<svg class="a" style="left:2px;top:2px" width="17" height="15"><defs><linearGradient id="fw" x1="0" y1="0" x2="0" y2="1"><stop offset="0" stop-color="#f4f8ff"/><stop offset="1" stop-color="#c6d8f0"/></linearGradient></defs><rect x="0.5" y="0.5" width="11" height="8" fill="#e4ebf6" stroke="#8a9ab8"/><rect x="2.5" y="2.5" width="11" height="8" fill="#e4ebf6" stroke="#8a9ab8"/><rect x="4.5" y="4.5" width="11" height="9" fill="url(#fw)" stroke="#5a6a8a"/><path d="M9.5 6.3 L7.2 7.8 L9.5 9.3 M10.8 8.8 L13.1 10.3 L10.8 11.8" stroke="#1a4ab8" fill="none" stroke-width="1.1"/></svg>
<div class="t" style="left:21px;top:0px;color:#fff;letter-spacing:0px;-webkit-text-stroke:.25px #fff">debugBefore():37, DebugJUnit4Test <i>(org.a</i></div>
<svg class="a" style="left:2px;top:21px" width="17" height="15"><defs><linearGradient id="fw" x1="0" y1="0" x2="0" y2="1"><stop offset="0" stop-color="#f4f8ff"/><stop offset="1" stop-color="#c6d8f0"/></linearGradient></defs><rect x="0.5" y="0.5" width="11" height="8" fill="#e4ebf6" stroke="#8a9ab8"/><rect x="2.5" y="2.5" width="11" height="8" fill="#e4ebf6" stroke="#8a9ab8"/><rect x="4.5" y="4.5" width="11" height="9" fill="url(#fw)" stroke="#5a6a8a"/><path d="M9.5 6.3 L7.2 7.8 L9.5 9.3 M10.8 8.8 L13.1 10.3 L10.8 11.8" stroke="#1a4ab8" fill="none" stroke-width="1.1"/></svg>
<div class="t" style="left:21px;top:19px;color:#000;letter-spacing:0px">beforeProcess():435, CamelTestSupport$D<i></i></div>
<svg class="a" style="left:2px;top:40px" width="17" height="15"><defs><linearGradient id="fw" x1="0" y1="0" x2="0" y2="1"><stop offset="0" stop-color="#f4f8ff"/><stop offset="1" stop-color="#c6d8f0"/></linearGradient></defs><rect x="0.5" y="0.5" width="11" height="8" fill="#e4ebf6" stroke="#8a9ab8"/><rect x="2.5" y="2.5" width="11" height="8" fill="#e4ebf6" stroke="#8a9ab8"/><rect x="4.5" y="4.5" width="11" height="9" fill="url(#fw)" stroke="#5a6a8a"/><path d="M9.5 6.3 L7.2 7.8 L9.5 9.3 M10.8 8.8 L13.1 10.3 L10.8 11.8" stroke="#1a4ab8" fill="none" stroke-width="1.1"/></svg>
<div class="t" style="left:21px;top:38px;color:#666;letter-spacing:0px">onBeforeProcess():270, DefaultDebugger <i>(</i></div>
<svg class="a" style="left:2px;top:59px" width="17" height="15"><defs><linearGradient id="fw" x1="0" y1="0" x2="0" y2="1"><stop offset="0" stop-color="#f4f8ff"/><stop offset="1" stop-color="#c6d8f0"/></linearGradient></defs><rect x="0.5" y="0.5" width="11" height="8" fill="#e4ebf6" stroke="#8a9ab8"/><rect x="2.5" y="2.5" width="11" height="8" fill="#e4ebf6" stroke="#8a9ab8"/><rect x="4.5" y="4.5" width="11" height="9" fill="url(#fw)" stroke="#5a6a8a"/><path d="M9.5 6.3 L7.2 7.8 L9.5 9.3 M10.8 8.8 L13.1 10.3 L10.8 11.8" stroke="#1a4ab8" fill="none" stroke-width="1.1"/></svg>
<div class="t" style="left:21px;top:57px;color:#666;letter-spacing:0px">beforeProcess():214, DefaultDebugger <i>(or</i></div>
<svg class="a" style="left:2px;top:78px" width="17" height="15"><defs><linearGradient id="fw" x1="0" y1="0" x2="0" y2="1"><stop offset="0" stop-color="#f4f8ff"/><stop offset="1" stop-color="#c6d8f0"/></linearGradient></defs><rect x="0.5" y="0.5" width="11" height="8" fill="#e4ebf6" stroke="#8a9ab8"/><rect x="2.5" y="2.5" width="11" height="8" fill="#e4ebf6" stroke="#8a9ab8"/><rect x="4.5" y="4.5" width="11" height="9" fill="url(#fw)" stroke="#5a6a8a"/><path d="M9.5 6.3 L7.2 7.8 L9.5 9.3 M10.8 8.8 L13.1 10.3 L10.8 11.8" stroke="#1a4ab8" fill="none" stroke-width="1.1"/></svg>
<div class="t" style="left:21px;top:76px;color:#666;letter-spacing:0.2px">process():47, Debug$1 <i>(org.apache.camel</i></div>
<svg class="a" style="left:2px;top:97px" width="17" height="15"><defs><linearGradient id="fw" x1="0" y1="0" x2="0" y2="1"><stop offset="0" stop-color="#f4f8ff"/><stop offset="1" stop-color="#c6d8f0"/></linearGradient></defs><rect x="0.5" y="0.5" width="11" height="8" fill="#e4ebf6" stroke="#8a9ab8"/><rect x="2.5" y="2.5" width="11" height="8" fill="#e4ebf6" stroke="#8a9ab8"/><rect x="4.5" y="4.5" width="11" height="9" fill="url(#fw)" stroke="#5a6a8a"/><path d="M9.5 6.3 L7.2 7.8 L9.5 9.3 M10.8 8.8 L13.1 10.3 L10.8 11.8" stroke="#1a4ab8" fill="none" stroke-width="1.1"/></svg>
<div class="t" style="left:21px;top:95px;color:#666;letter-spacing:0px">process():70, AsyncProcessorHelper <i>(org.a</i></div>
</div>
<div class="a" style="left:322px;top:401px;width:15px;height:116px;background:linear-gradient(90deg,#d4d4d4,#f6f6f6 40%,#fdfdfd 70%,#e6e6e6);border-left:1px solid #c4c4c4"></div>
<div class="a" style="left:323px;top:408px;width:13px;height:54px;border-radius:7px;border:1px solid #3a60b0;background:linear-gradient(90deg,#7aa8e0,#b4d8f8 12%,#98c8f2 42%,#1a7ee0 48%,#2a8eea 58%,#6cbcf8 85%,#4a8ee0)"></div>
<div class="a" style="left:345px;top:351px;width:745px;height:170px;background:#fff;border:1px solid #8a8a8a;border-radius:4px 0 0 0"></div>
<div class="a" style="left:346px;top:352px;width:739px;height:21px;background:linear-gradient(#f6f6f6,#e6e6e6);border-radius:3px 0 0 0"></div>
<div class="a" style="left:346px;top:373px;width:739px;height:1px;background:#8a8a8a"></div>
<svg class="a" style="left:351px;top:356px;" width="12" height="12" viewBox="0 0 12 12"><defs><linearGradient id="vb" x1="0" y1="0" x2="0" y2="1"><stop offset="0" stop-color="#fff4b0"/><stop offset="1" stop-color="#eea01a"/></linearGradient></defs><rect x="0.5" y="0.5" width="11" height="11" fill="#fff" stroke="#7a8498"/><rect x="1" y="1" width="10" height="3" fill="url(#vb)"/><rect x="1" y="4.6" width="10" height="3" fill="url(#vb)"/><rect x="1" y="8.2" width="10" height="2.8" fill="url(#vb)"/></svg>
<div class="t" style="left:370px;top:352px;line-height:21px;font-size:13.6px">Variables</div>
<svg class="a" style="left:1078px;top:356px;" width="7" height="12" viewBox="0 0 7 12"><path d="M1.5 5 V1.5 H8.5" stroke="#34425e" fill="none" stroke-width="1.3"/><path d="M5.5 11.5 V7" stroke="#34425e" stroke-width="1.3"/><path d="M2.8 9 L5.5 6 L8.2 9Z" fill="#34425e"/></svg>
<div class="a" style="left:346px;top:374px;width:25px;height:143px;background:#ececec"></div>
<div class="a" style="left:371px;top:374px;width:1px;height:143px;background:#c6c6c6"></div>
<svg class="a" style="left:351px;top:379px;" width="15" height="13" viewBox="0 0 15 13"><rect x="0.5" y="0.5" width="13" height="11" fill="#dde4ee" stroke="#5a6478"/><path d="M3 3h8" stroke="#2a5ab8" stroke-width="1.2" stroke-dasharray="1 1"/><path d="M3 5.5h8M3 7.5h8M3 9.5h6" stroke="#6a7488" stroke-width="1" stroke-dasharray="1 1"/><rect x="10" y="6.5" width="2" height="1.5" fill="#e02020"/><rect x="10" y="8.5" width="2" height="1.5" fill="#20b020"/></svg>
<div class="a" style="left:346px;top:399px;width:25px;height:25px;background:#8d9dcb;border:1px solid #1c2c6c"></div>
<svg class="a" style="left:350px;top:402px;" width="17" height="17" viewBox="0 0 17 17"><circle cx="10" cy="6" r="5" fill="#f0c8b8" stroke="#7a4a3a" stroke-width=".8"/><path d="M7.5 7.5 V4.5 L10 7 L12.5 4.5 V7.5" stroke="#5a2a2a" fill="none" stroke-width=".9"/><circle cx="4" cy="12" r="3" fill="#6ad06a" stroke="#1a6a2a" stroke-width=".7"/><circle cx="10" cy="13" r="3" fill="#6ad06a" stroke="#1a6a2a" stroke-width=".7"/></svg>
<svg class="a" style="left:351px;top:429px;" width="16" height="15" viewBox="0 0 16 15"><rect x="0.5" y="0.5" width="11" height="10" fill="#f8d860" stroke="#a07a20"/><path d="M1 3.5h10M1 6.5h10" stroke="#a07a20"/><rect x="6.5" y="6.5" width="9" height="8" fill="#fff" stroke="#3a4a6a"/><path d="M9 13 L11 8.5 L13 13 M9.7 11.5 H12.3" stroke="#3a4a6a" fill="none" stroke-width=".8"/></svg>
<svg class="a" style="left:376px;top:379px;" width="9" height="10" viewBox="0 0 9 10"><path d="M0 0.3 L7.5 4.65 L0 9 Z" fill="#8a8a8a"/></svg>
<svg class="a" style="left:396px;top:377px;" width="12" height="12" viewBox="0 0 12 12"><defs><linearGradient id="vb" x1="0" y1="0" x2="0" y2="1"><stop offset="0" stop-color="#fff4b0"/><stop offset="1" stop-color="#eea01a"/></linearGradient></defs><rect x="0.5" y="0.5" width="11" height="11" fill="#fff" stroke="#7a8498"/><rect x="1" y="1" width="10" height="3" fill="url(#vb)"/><rect x="1" y="4.6" width="10" height="3" fill="url(#vb)"/><rect x="1" y="8.2" width="10" height="2.8" fill="url(#vb)"/></svg>
<div class="t" style="left:413px;top:374px;letter-spacing:0px"><span style="color:#7a0a0a">this</span> = <span style="color:#000">{org.apache.camel.test.patterns.DebugJUnit4Test@1005}</span></div>
<svg class="a" style="left:376px;top:398px;" width="9" height="10" viewBox="0 0 9 10"><path d="M0 0.3 L7.5 4.65 L0 9 Z" fill="#8a8a8a"/></svg>
<svg class="a" style="left:396px;top:396px;" width="12" height="12" viewBox="0 0 12 12"><defs><linearGradient id="vb" x1="0" y1="0" x2="0" y2="1"><stop offset="0" stop-color="#fff4b0"/><stop offset="1" stop-color="#eea01a"/></linearGradient></defs><rect x="0.5" y="0.5" width="11" height="11" fill="#fff" stroke="#7a8498"/><rect x="1" y="1" width="10" height="3" fill="url(#vb)"/><rect x="1" y="4.6" width="10" height="3" fill="url(#vb)"/><rect x="1" y="8.2" width="10" height="2.8" fill="url(#vb)"/></svg>
<div class="t" style="left:413px;top:393px;letter-spacing:-0.02px"><span style="color:#7a0a0a">exchange</span> = <span style="color:#b0b0b0">{org.apache.camel.impl.DefaultExchange@1012}</span>&quot;Exchange[Message: World]&quot;</div>
<svg class="a" style="left:376px;top:417px;" width="9" height="10" viewBox="0 0 9 10"><path d="M0 0.3 L7.5 4.65 L0 9 Z" fill="#8a8a8a"/></svg>
<svg class="a" style="left:396px;top:415px;" width="12" height="12" viewBox="0 0 12 12"><defs><linearGradient id="vb" x1="0" y1="0" x2="0" y2="1"><stop offset="0" stop-color="#fff4b0"/><stop offset="1" stop-color="#eea01a"/></linearGradient></defs><rect x="0.5" y="0.5" width="11" height="11" fill="#fff" stroke="#7a8498"/><rect x="1" y="1" width="10" height="3" fill="url(#vb)"/><rect x="1" y="4.6" width="10" height="3" fill="url(#vb)"/><rect x="1" y="8.2" width="10" height="2.8" fill="url(#vb)"/></svg>
<div class="t" style="left:413px;top:412px;letter-spacing:0.11px"><span style="color:#7a0a0a">processor</span> = <span style="color:#b0b0b0">{org.apache.camel.processor.interceptor.TraceInterceptor@1013}</span>&quot;TraceInterceptor[To[mock:a]]&quot;</div>
<svg class="a" style="left:376px;top:436px;" width="9" height="10" viewBox="0 0 9 10"><path d="M0 0.3 L7.5 4.65 L0 9 Z" fill="#8a8a8a"/></svg>
<svg class="a" style="left:396px;top:434px;" width="12" height="12" viewBox="0 0 12 12"><defs><linearGradient id="vb" x1="0" y1="0" x2="0" y2="1"><stop offset="0" stop-color="#fff4b0"/><stop offset="1" stop-color="#eea01a"/></linearGradient></defs><rect x="0.5" y="0.5" width="11" height="11" fill="#fff" stroke="#7a8498"/><rect x="1" y="1" width="10" height="3" fill="url(#vb)"/><rect x="1" y="4.6" width="10" height="3" fill="url(#vb)"/><rect x="1" y="8.2" width="10" height="2.8" fill="url(#vb)"/></svg>
<div class="t" style="left:413px;top:431px;letter-spacing:0.09px"><span style="color:#7a0a0a">definition</span> = <span style="color:#b0b0b0">{org.apache.camel.model.ToDefinition@1014}</span>&quot;To[mock:a]&quot;</div>
<svg class="a" style="left:376px;top:455px;" width="9" height="10" viewBox="0 0 9 10"><path d="M0 0.3 L7.5 4.65 L0 9 Z" fill="#8a8a8a"/></svg>
<svg class="a" style="left:396px;top:453px;" width="12" height="12" viewBox="0 0 12 12"><defs><linearGradient id="vb" x1="0" y1="0" x2="0" y2="1"><stop offset="0" stop-color="#fff4b0"/><stop offset="1" stop-color="#eea01a"/></linearGradient></defs><rect x="0.5" y="0.5" width="11" height="11" fill="#fff" stroke="#7a8498"/><rect x="1" y="1" width="10" height="3" fill="url(#vb)"/><rect x="1" y="4.6" width="10" height="3" fill="url(#vb)"/><rect x="1" y="8.2" width="10" height="2.8" fill="url(#vb)"/></svg>
<div class="t" style="left:413px;top:450px;letter-spacing:0px"><span style="color:#7a0a0a">id</span> = <span style="color:#b0b0b0">{java.lang.String@1015}</span>&quot;to1&quot;</div>
<svg class="a" style="left:376px;top:474px;" width="9" height="10" viewBox="0 0 9 10"><path d="M0 0.3 L7.5 4.65 L0 9 Z" fill="#8a8a8a"/></svg>
<svg class="a" style="left:396px;top:472px;" width="12" height="12" viewBox="0 0 12 12"><defs><linearGradient id="vb" x1="0" y1="0" x2="0" y2="1"><stop offset="0" stop-color="#fff4b0"/><stop offset="1" stop-color="#eea01a"/></linearGradient></defs><rect x="0.5" y="0.5" width="11" height="11" fill="#fff" stroke="#7a8498"/><rect x="1" y="1" width="10" height="3" fill="url(#vb)"/><rect x="1" y="4.6" width="10" height="3" fill="url(#vb)"/><rect x="1" y="8.2" width="10" height="2.8" fill="url(#vb)"/></svg>
<div class="t" style="left:413px;top:469px;letter-spacing:0px"><span style="color:#7a0a0a">shortName</span> = <span style="color:#b0b0b0">{java.lang.String@1016}</span>&quot;mock:a&quot;</div>
<svg class="a" style="left:376px;top:493px;" width="9" height="10" viewBox="0 0 9 10"><path d="M0 0.3 L7.5 4.65 L0 9 Z" fill="#8a8a8a"/></svg>
<svg class="a" style="left:394px;top:491px;" width="18" height="13" viewBox="0 0 18 13"><defs><radialGradient id="gl" cx=".4" cy=".35" r=".7"><stop offset="0" stop-color="#e0ffe0"/><stop offset="1" stop-color="#3ac03a"/></radialGradient></defs><path d="M2 8 C1 5 2 2 4.5 1.5" stroke="#2a3a50" fill="none" stroke-width="1"/><circle cx="4.5" cy="9" r="2.8" fill="url(#gl)" stroke="#2a3a50" stroke-width=".9"/><circle cx="10" cy="9.3" r="2.8" fill="url(#gl)" stroke="#2a3a50" stroke-width=".9"/><path d="M12.8 8.5 C14 6 15 4 16.5 5" stroke="#2a3a50" fill="none" stroke-width="1"/></svg>
<div class="t" style="left:413px;top:488px;letter-spacing:0px"><span style="color:#7a0a0a">log</span> = <span style="color:#000">{org.apache.commons.logging.impl.Log4JLogger@1385}</span></div>
</body></html>
